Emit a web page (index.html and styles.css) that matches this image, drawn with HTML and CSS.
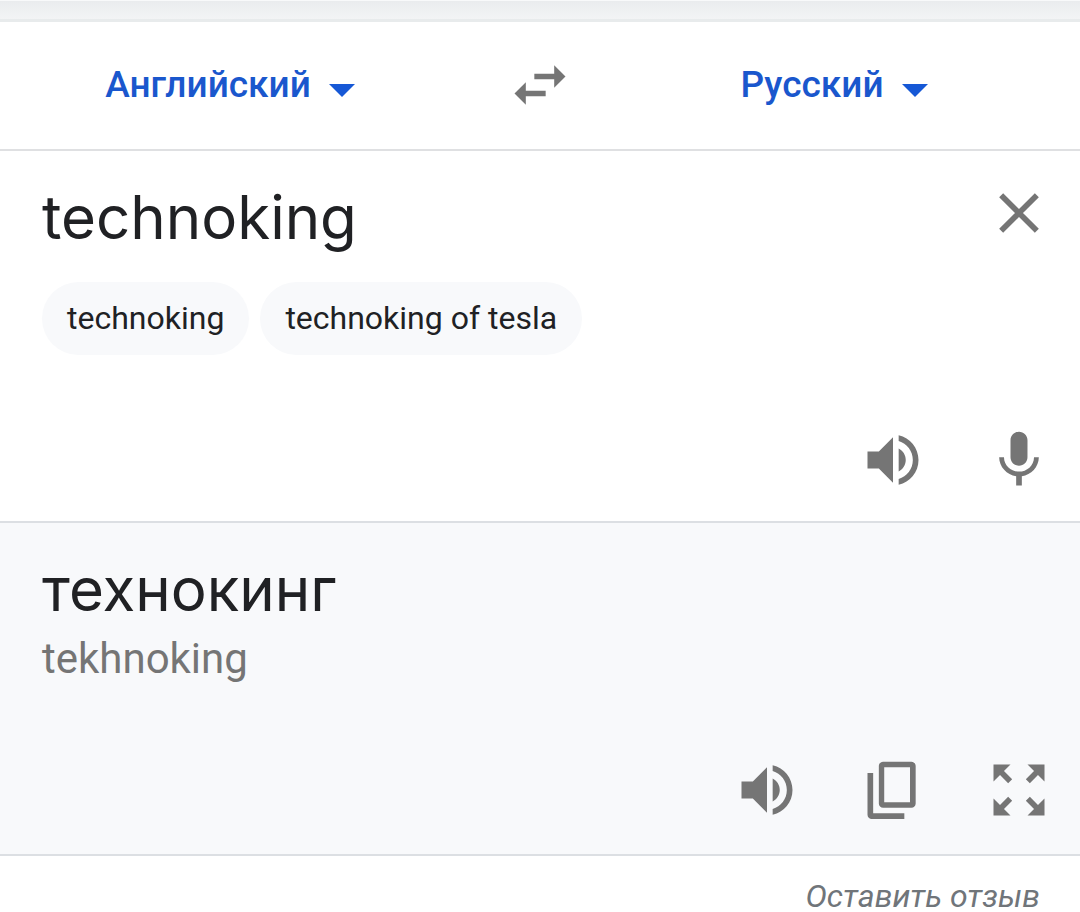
FILE: index.html
```html
<!DOCTYPE html>
<html lang="ru">
<head>
<meta charset="utf-8">
<meta name="viewport" content="width=device-width, initial-scale=1">
<title>Переводчик</title>
<link rel="stylesheet" href="styles.css">
</head>
<body>
<div class="top-strip"></div>
<header class="languages">
  <div class="language">
    <select class="language-select" aria-label="Исходный язык">
      <option selected>Английский</option>
      <option>Русский</option>
    </select>
    <svg class="caret" viewBox="0 0 26 13" aria-hidden="true"><path d="M0 0h26L13 13z"/></svg>
  </div>
  <button class="icon-button" type="button" aria-label="Поменять языки местами">
    <svg class="icon" viewBox="0 0 24 24"><path d="M6.99 11L3 15l3.99 4v-3H14v-2H6.99v-3zM21 9l-3.99-4v3H10v2h7.01v3L21 9z"/></svg>
  </button>
  <div class="language">
    <select class="language-select" aria-label="Язык перевода">
      <option>Английский</option>
      <option selected>Русский</option>
    </select>
    <svg class="caret" viewBox="0 0 26 13" aria-hidden="true"><path d="M0 0h26L13 13z"/></svg>
  </div>
</header>
<main>
  <section class="panel source">
    <div class="source-row">
      <input class="phrase source-input" type="text" value="technoking" aria-label="Исходный текст" spellcheck="false">
      <button class="icon-button" type="button" aria-label="Очистить">
        <svg class="icon" viewBox="0 0 24 24"><path d="M19 6.41L17.59 5 12 10.59 6.41 5 5 6.41 10.59 12 5 17.59 6.41 19 12 13.41 17.59 19 19 17.59 13.41 12z"/></svg>
      </button>
    </div>
    <div class="chips">
      <button class="chip" type="button">technoking</button>
      <button class="chip" type="button">technoking of tesla</button>
    </div>
    <div class="actions">
      <button class="icon-button" type="button" aria-label="Прослушать">
        <svg class="icon" viewBox="0 0 24 24"><path d="M3 9v6h4l5 5V4L7 9H3zm13.500 3c0-1.770-1.020-3.290-2.500-4.030v8.050c1.480-.730 2.500-2.250 2.500-4.020zM14 3.230v2.060c2.890.860 5 3.540 5 6.710s-2.110 5.850-5 6.710v2.060c4.010-.910 7-4.490 7-8.770s-2.990-7.860-7-8.770z"/></svg>
      </button>
      <button class="icon-button" type="button" aria-label="Голосовой ввод">
        <svg class="icon" viewBox="0 0 24 24"><path d="M12 14c1.660 0 2.990-1.340 2.990-3L15 5c0-1.660-1.340-3-3-3S9 3.340 9 5v6c0 1.660 1.340 3 3 3zm5.300-3c0 3-2.540 5.100-5.300 5.100S6.700 14 6.700 11H5c0 3.410 2.720 6.230 6 6.720V21h2v-3.280c3.280-.480 6-3.300 6-6.720h-1.700z"/></svg>
      </button>
    </div>
  </section>
  <section class="panel target">
    <p class="phrase">технокинг</p>
    <p class="translit">tekhnoking</p>
    <div class="actions">
      <button class="icon-button" type="button" aria-label="Прослушать перевод">
        <svg class="icon" viewBox="0 0 24 24"><path d="M3 9v6h4l5 5V4L7 9H3zm13.500 3c0-1.770-1.020-3.290-2.500-4.030v8.050c1.480-.730 2.500-2.250 2.500-4.020zM14 3.230v2.060c2.890.860 5 3.540 5 6.710s-2.110 5.850-5 6.710v2.060c4.010-.910 7-4.490 7-8.770s-2.990-7.860-7-8.770z"/></svg>
      </button>
      <button class="icon-button" type="button" aria-label="Копировать перевод">
        <svg class="icon" viewBox="0 0 24 24"><path fill-rule="evenodd" d="M8.500 2h10c.830 0 1.500.670 1.500 1.500v13.300c0 .830-.670 1.500-1.500 1.500h-10c-.830 0-1.500-.670-1.500-1.500V3.500C7 2.670 7.670 2 8.500 2zM8.900 4v12.300H18V4zM3 6h2v14.200h11v2H4.500c-.830 0-1.500-.670-1.500-1.500z"/></svg>
      </button>
      <button class="icon-button" type="button" aria-label="На весь экран">
        <svg class="icon" viewBox="0 0 24 24"><path d="M15 3l2.300 2.300-2.890 2.870 1.420 1.420L18.700 6.700 21 9V3zM3 9l2.300-2.300 2.870 2.890 1.420-1.420L6.700 5.300 9 3H3zM9 21l-2.300-2.300 2.890-2.870-1.420-1.420L5.300 17.300 3 15v6zM21 15l-2.300 2.300-2.870-2.890-1.420 1.420 2.890 2.870L15 21h6z"/></svg>
      </button>
    </div>
  </section>
</main>
<footer class="footer"><a class="feedback" href="#feedback">Оставить отзыв</a></footer>
</body>
</html>
```
FILE: styles.css
```css
* {
  box-sizing: border-box;
}

body {
  margin: 0;
  background: #fff;
  color: #202124;
  font-family: Roboto, "Noto Sans", sans-serif;
}

button,
input,
select {
  margin: 0;
  padding: 0;
  border: 0;
  background: none;
  color: inherit;
  font: inherit;
}

p {
  margin: 0;
}

.top-strip {
  height: 22px;
  border-top: 1px solid #f8f9fa;
  border-bottom: 3px solid #e8ebec;
  background: linear-gradient(#eaecee, #f3f4f5);
}

.languages {
  display: grid;
  grid-template-columns: 1fr 128px 1fr;
  align-items: center;
  justify-items: center;
  padding: 29px 0 30px;
  border-bottom: 2px solid #dfe0e2;
}

.language {
  display: flex;
  align-items: center;
  padding-right: 16px;
  color: #1a57cd;
}

.language-select {
  field-sizing: content;
  appearance: none;
  padding-right: 44px;
  font-size: 37px;
  font-weight: 500;
  line-height: 48px;
  cursor: pointer;
}

.caret {
  width: 26px;
  height: 13px;
  margin: 10px 0 0 -26px;
  fill: #1658d6;
  pointer-events: none;
}

.icon-button {
  display: block;
  flex: none;
  color: #757575;
  cursor: pointer;
}

.icon {
  display: block;
  width: 68px;
  height: 68px;
  fill: currentColor;
}

.panel {
  display: flex;
  flex-direction: column;
  padding: 28px 27px 27px 42px;
  border-bottom: 2px solid #dcdfe3;
}

.source-row {
  display: flex;
  align-items: flex-start;
  gap: 24px;
}

.phrase {
  font-family: Inter, "Noto Sans", sans-serif;
  font-size: 60px;
  line-height: 76px;
}

.source-input {
  flex: 1;
  min-width: 0;
  height: 76px;
  outline: none;
}

.chips {
  display: flex;
  flex-wrap: wrap;
  gap: 11px;
  margin-top: 27px;
}

.chip {
  padding: 0 25px;
  border-radius: 37px;
  background: #f8f9fb;
  font-size: 32px;
  line-height: 73px;
  cursor: pointer;
}

.actions {
  display: flex;
  justify-content: flex-end;
  gap: 58px;
  margin-top: 71px;
}

.target {
  padding-bottom: 30px;
  background: #f8f9fb;
}

.translit {
  margin-top: 5px;
  color: #757575;
  font-size: 42px;
  line-height: 53px;
}

.footer {
  display: flex;
  justify-content: flex-end;
  padding: 24px 40px 0;
}

.feedback {
  color: #70757a;
  font-size: 32px;
  font-style: italic;
  line-height: 32px;
  text-decoration: none;
}
```
